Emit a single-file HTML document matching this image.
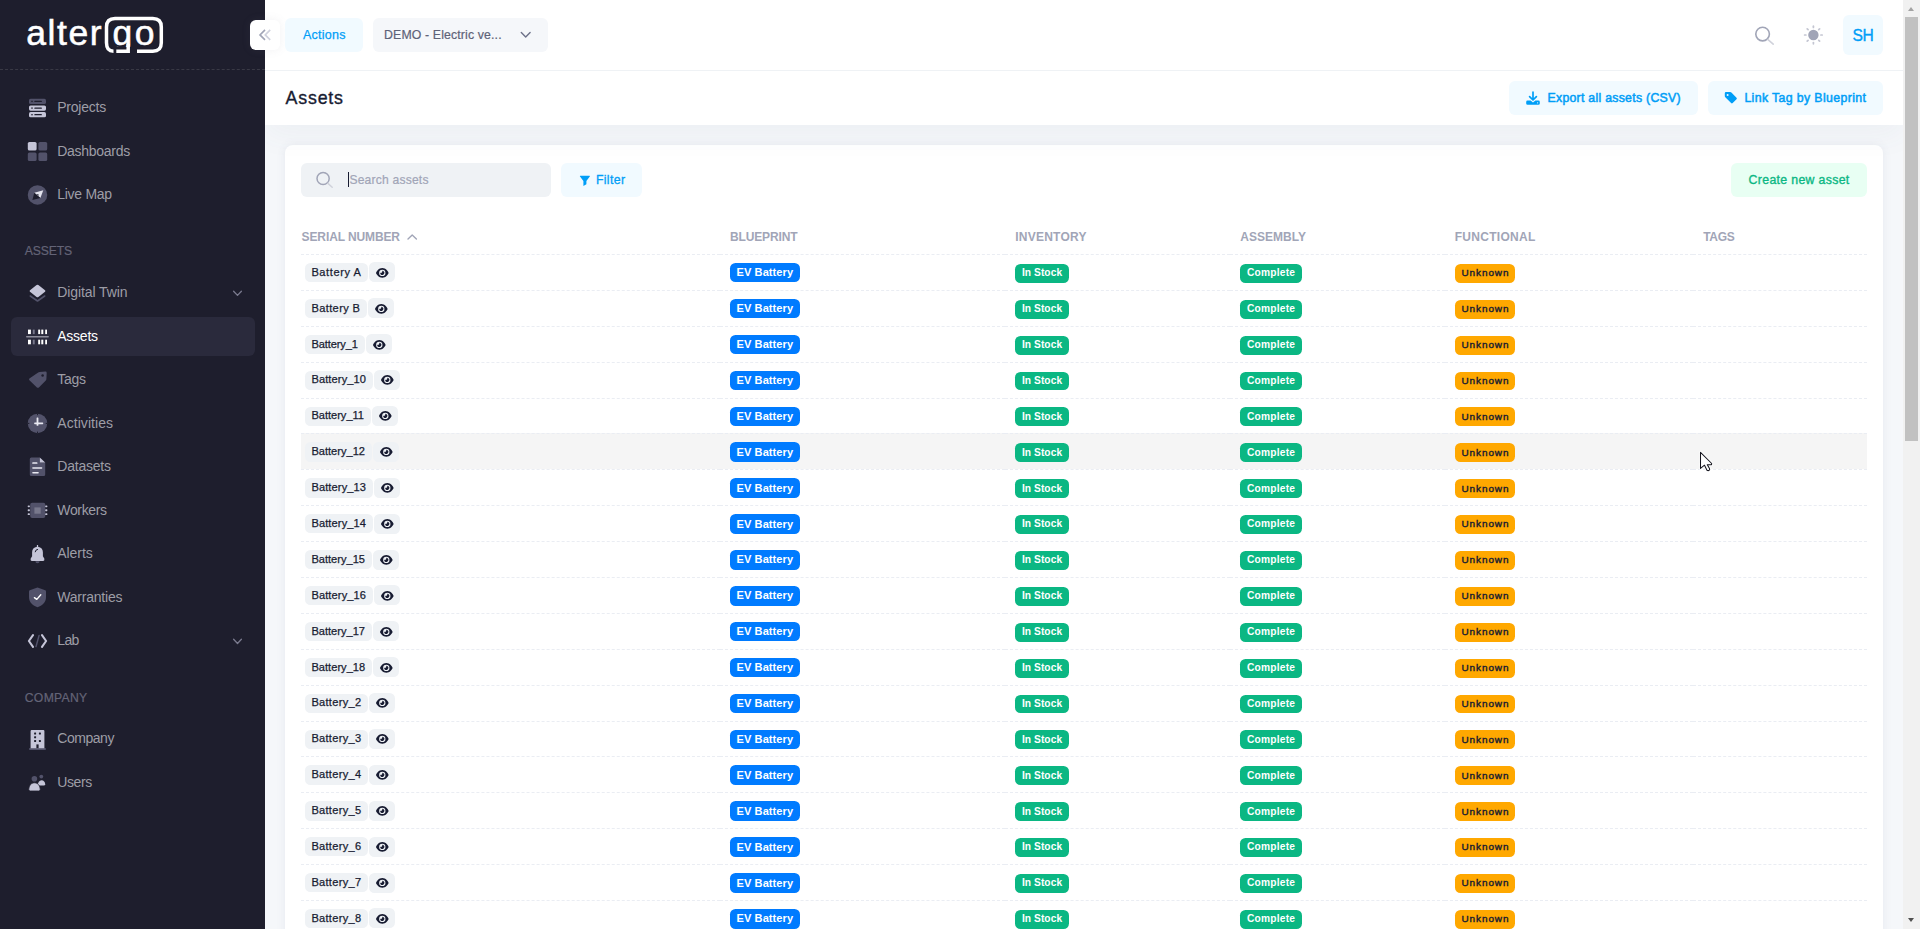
<!DOCTYPE html>
<html lang="en">
<head>
<meta charset="utf-8">
<title>Assets</title>
<style>
*{box-sizing:border-box;margin:0;padding:0}
html,body{width:1920px;height:929px;overflow:hidden;background:#f5f7fa;font-family:"Liberation Sans",sans-serif}
body{position:relative;color:#181c32}
.t{position:absolute;white-space:pre;line-height:20px}
svg{position:absolute;overflow:visible}
#sidebar{z-index:5;position:absolute;left:0;top:0;width:265px;height:929px;background:#1e1e2d}
#sidebar .sep{position:absolute;left:0;top:69px;width:265px;height:0;border-top:1px dashed #393945}
#sidebar .act{position:absolute;left:11px;top:317px;width:244px;height:39px;border-radius:6px;background:#2a2a3c}
#main{position:absolute;left:0;top:0;width:1903px;height:929px}
#header{z-index:3;position:absolute;left:265px;top:0;width:1638px;height:71px;background:#fff;border-bottom:1px solid #eff2f5}
#toolbar{z-index:2;position:absolute;left:265px;top:71px;width:1638px;height:54px;background:#fff;box-shadow:0 10px 30px rgba(80,90,115,.052)}
.bx{position:absolute;border-radius:6px}
.lp{background:#f1faff}
.ls{background:#e8fff3}
.lg{background:#f5f7fa}
#toggle{position:absolute;left:250px;top:20px;width:30px;height:30px;border-radius:6px;background:#fff;box-shadow:0 0 10px rgba(113,121,136,.1)}
#sb{z-index:7;position:absolute;left:1903px;top:0;width:17px;height:929px;background:#f1f1f1}
#sb .thumb{position:absolute;left:2px;top:17px;width:13px;height:424px;background:#c1c1c1}
#sb i{position:absolute;left:4.6px;width:0;height:0;border-left:3.9px solid transparent;border-right:3.9px solid transparent}
#sb .up{top:7px;border-bottom:4px solid #a3a3a3}
#sb .dn{top:918px;border-top:4px solid #505050}
#card{position:absolute;left:285px;top:145px;width:1598px;height:800px;background:#fff;border-radius:8px;box-shadow:0 0 10px rgba(76,87,125,.09)}
.ln{position:absolute;height:0;border-top:1px dashed #eaedf3}
.hov{position:absolute;left:301px;width:1566px;background:#f5f5f5}
.bd{position:absolute;border-radius:5.5px}
.hc{position:absolute;left:0;top:0;width:0;height:0;z-index:6}

</style>
</head>
<body>
<aside id="sidebar">
<div class="sep"></div><div class="act"></div>
<svg width="265" height="929" viewBox="0 0 265 929" style="left:0;top:0"><path d="M113.5 51.3 Q106.5 51.3 106.5 42.8 V26.9 Q106.5 18.4 115.0 18.4 H152.8 Q161.3 18.4 161.3 26.9 V42.8 Q161.3 51.3 152.8 51.3 H137" fill="none" stroke="#fff" stroke-width="3.5" stroke-linecap="butt"/><path d="M116.3 51.3 H128.2 V44" fill="none" stroke="#fff" stroke-width="3.5" stroke-linejoin="miter"/><rect x="29" y="98.8" width="17" height="5.2" rx="1.6" fill="#52526a"/>
<rect x="31.3" y="100.75" width="1.4" height="1.3" fill="#1e1e2d"/><rect x="34.3" y="100.75" width="7.6" height="1.3" rx=".6" fill="#1e1e2d"/>
<rect x="29" y="105.5" width="17" height="5.2" rx="1.6" fill="#c5c5d8"/>
<rect x="31.3" y="107.45" width="1.4" height="1.3" fill="#1e1e2d"/><rect x="34.3" y="107.45" width="7.6" height="1.3" rx=".6" fill="#1e1e2d"/>
<rect x="29" y="112.1" width="17" height="5.2" rx="1.6" fill="#c5c5d8"/>
<rect x="31.3" y="114.05" width="1.4" height="1.3" fill="#1e1e2d"/><rect x="34.3" y="114.05" width="7.6" height="1.3" rx=".6" fill="#1e1e2d"/>
<rect x="27.8" y="141.9" width="8.8" height="8.6" rx="1.6" fill="#c5c5d8"/>
<rect x="38.4" y="141.9" width="8.8" height="8.6" rx="1.6" fill="#52526a"/>
<rect x="27.8" y="152.4" width="8.8" height="8.6" rx="1.6" fill="#52526a"/>
<rect x="38.4" y="152.4" width="8.8" height="8.6" rx="1.6" fill="#52526a"/>
<circle cx="37.5" cy="194.9" r="9.75" fill="#52526a"/>
<path d="M34.3 192.8 L43.3 190.3 L40.4 198 Z" fill="#e4e4ee"/>
<path d="M34.3 192.8 L40.4 198 L32.4 200 Z" fill="#1e1e2d"/>
<circle cx="37.6" cy="195" r="1" fill="#1e1e2d"/><circle cx="37.6" cy="195" r=".45" fill="#e4e4ee"/>
<path d="M36.6 285 Q37.5 284.3 38.4 285 L45 290.2 Q45.9 291 45 291.8 L38.4 297 Q37.5 297.7 36.6 297 L30 291.8 Q29.1 291 30 290.2 Z" fill="#c5c5d8"/>
<path d="M30.3 296 L37.5 301 L44.7 296" fill="none" stroke="#52526a" stroke-width="1.6" stroke-linecap="round" stroke-linejoin="round"/>
<rect x="28" y="329.6" width="2.9" height="4.5" fill="#fff"/><rect x="28" y="339.7" width="2.9" height="4.6" fill="#fff"/>
<rect x="32.8" y="329.6" width="1.9" height="4.5" fill="#77778a"/><rect x="32.8" y="339.7" width="1.9" height="4.6" fill="#77778a"/>
<rect x="38.2" y="329.6" width="1.9" height="4.5" fill="#fff"/><rect x="38.2" y="339.7" width="1.9" height="4.6" fill="#fff"/>
<rect x="41.3" y="329.6" width="2.0" height="4.5" fill="#fff"/><rect x="41.3" y="339.7" width="2.0" height="4.6" fill="#fff"/>
<rect x="45.2" y="329.6" width="1.8" height="4.5" fill="#fff"/><rect x="45.2" y="339.7" width="1.8" height="4.6" fill="#fff"/>
<rect x="26" y="336" width="22.9" height="1.4" rx=".7" fill="#8e8e9c"/>
<path d="M39.6 371.9 L45.4 371.6 Q46.8 371.6 46.7 373 L46.4 379 Q46.4 379.8 45.8 380.4 L38.9 387.4 Q37.9 388.3 36.9 387.4 L29.4 380.2 Q28.6 379.3 29.4 378.4 L38.2 372.5 Q38.8 372 39.6 371.9 Z" fill="#52526a"/>
<circle cx="42.6" cy="375.5" r="1.25" fill="#1e1e2d"/>
<circle cx="37.5" cy="423.4" r="9.75" fill="#52526a"/>
<rect x="36.6" y="417.4" width="1.8" height="8.4" rx=".6" fill="#e9e9f2"/><rect x="34.2" y="422.4" width="9" height="1.8" rx=".6" fill="#e9e9f2"/>
<rect x="37" y="413.6" width="1" height="1.6" fill="#1e1e2d"/>
<rect x="37" y="431.6" width="1" height="1.6" fill="#1e1e2d"/>
<rect x="27.7" y="422.9" width="1.6" height="1" fill="#1e1e2d"/>
<rect x="45.7" y="422.9" width="1.6" height="1" fill="#1e1e2d"/>
<path d="M31.3 457.6 H39.8 V462.6 H45.2 V474.5 Q45.2 476 43.7 476 H31.3 Q29.8 476 29.8 474.5 V459.1 Q29.8 457.6 31.3 457.6 Z" fill="#52526a"/>
<path d="M39.8 457.6 L45.2 462.6 H39.8 Z" fill="#c5c5d8"/>
<rect x="32.2" y="462.35" width="5.299999999999997" height="1.5" rx=".7" fill="#e9e9f2"/>
<rect x="32.2" y="467.15" width="10.099999999999994" height="1.5" rx=".7" fill="#e9e9f2"/>
<rect x="32.2" y="471.95" width="6.599999999999994" height="1.5" rx=".7" fill="#e9e9f2"/>
<rect x="30.2" y="502.8" width="15.1" height="15.3" rx="2" fill="#52526a"/>
<rect x="34.4" y="507.4" width="6.3" height="6.3" fill="#78788c"/>
<rect x="27.7" y="505.4" width="2.2" height="1.9" rx=".7" fill="#c5c5d8"/><rect x="45.2" y="505.4" width="2.2" height="1.9" rx=".7" fill="#c5c5d8"/>
<rect x="27.7" y="509.3" width="2.2" height="1.9" rx=".7" fill="#c5c5d8"/><rect x="45.2" y="509.3" width="2.2" height="1.9" rx=".7" fill="#c5c5d8"/>
<rect x="27.7" y="513.2" width="2.2" height="1.9" rx=".7" fill="#c5c5d8"/><rect x="45.2" y="513.2" width="2.2" height="1.9" rx=".7" fill="#c5c5d8"/>
<path d="M35.4 561.2 A2.1 2.1 0 0 0 39.6 561.2 Z" fill="#52526a"/>
<path d="M36.9 544.9 H38.1 V546.7 C41.2 547.1 42.9 549.4 42.9 552.3 V556.2 L44.3 558.6 Q44.9 561 43.3 561 H31.7 Q30.1 561 30.7 558.6 L32.1 556.2 V552.3 C32.1 549.4 33.8 547.1 36.9 546.7 Z" fill="#c5c5d8"/>
<path d="M35.2 551.8 A2.6 2.6 0 0 1 37.6 549.4" fill="none" stroke="#1e1e2d" stroke-width="1" stroke-linecap="round"/>
<path d="M37.5 587.5 L45.3 590.2 Q46 590.5 46 591.3 V597 C46 602.4 42.2 605.7 37.5 607.3 C32.8 605.7 29 602.4 29 597 V591.3 Q29 590.5 29.7 590.2 Z" fill="#52526a"/>
<path d="M34.4 597.6 L36.8 599.4 L40.8 594.7" fill="none" stroke="#fff" stroke-width="1.35" stroke-linecap="round" stroke-linejoin="round"/>
<path d="M33 635.2 L28.9 641 L33 646.8" fill="none" stroke="#c5c5d8" stroke-width="2.1" stroke-linecap="round" stroke-linejoin="round"/>
<path d="M42 635.2 L46.1 641 L42 646.8" fill="none" stroke="#c5c5d8" stroke-width="2.1" stroke-linecap="round" stroke-linejoin="round"/>
<path d="M39.1 635.4 L36 646.6" fill="none" stroke="#52526a" stroke-width="1.5" stroke-linecap="round"/>
<rect x="29" y="748" width="17" height="1.9" rx=".9" fill="#52526a"/>
<path d="M31.6 730 H43.4 Q44.4 730 44.4 731 V748.2 H30.6 V731 Q30.6 730 31.6 730 Z" fill="#c5c5d8"/>
<rect x="34.1" y="732.6" width="2" height="2" rx=".5" fill="#1e1e2d"/>
<rect x="34.1" y="736.3" width="2" height="2" rx=".5" fill="#1e1e2d"/>
<rect x="34.1" y="740" width="2" height="2" rx=".5" fill="#1e1e2d"/>
<rect x="38.9" y="732.6" width="2" height="2" rx=".5" fill="#1e1e2d"/>
<rect x="38.9" y="740" width="2" height="2" rx=".5" fill="#1e1e2d"/>
<rect x="36.4" y="744.4" width="2.2" height="3.8" fill="#1e1e2d"/>
<circle cx="34.4" cy="778.8" r="2.8" fill="#52526a"/><circle cx="41.3" cy="776.6" r="1.9" fill="#52526a"/>
<path d="M37.8 785.6 C37.8 782.4 39.3 780.2 41.5 780.2 C43.7 780.2 45.2 782.4 45.2 784.2 Q45.2 785.6 43.8 785.6 Z" fill="#c5c5d8"/>
<path d="M28.8 789.6 C28.8 785.6 31.2 782.8 34.5 782.8 C37.8 782.8 40.2 785.6 40.2 789.6 Q40.2 791 38.8 791 H30.2 Q28.8 791 28.8 789.6 Z" fill="#c5c5d8" stroke="#1e1e2d" stroke-width=".8"/>
<path d="M233.6 291.2 L237.5 295.4 L241.4 291.2" fill="none" stroke="#7a7a8e" stroke-width="1.3" stroke-linecap="round" stroke-linejoin="round"/>
<path d="M233.6 639.3 L237.5 643.5 L241.4 639.3" fill="none" stroke="#7a7a8e" stroke-width="1.3" stroke-linecap="round" stroke-linejoin="round"/></svg>
<span class="t" style="left:57.25px;top:97px;font-size:14.0px;color:#9d9da6;letter-spacing:-0.225px;">Projects</span>
<span class="t" style="left:57.25px;top:141px;font-size:14.0px;color:#9d9da6;letter-spacing:-0.278px;">Dashboards</span>
<span class="t" style="left:57.25px;top:184px;font-size:14.0px;color:#9d9da6;letter-spacing:-0.280px;">Live Map</span>
<span class="t" style="left:57.25px;top:282px;font-size:14.0px;color:#9d9da6;letter-spacing:-0.084px;">Digital Twin</span>
<span class="t" style="left:57.25px;top:326px;font-size:14.0px;color:#ffffff;letter-spacing:-0.243px;">Assets</span>
<span class="t" style="left:57.25px;top:369px;font-size:14.0px;color:#9d9da6;letter-spacing:-0.259px;">Tags</span>
<span class="t" style="left:57.25px;top:413px;font-size:14.0px;color:#9d9da6;letter-spacing:0.068px;">Activities</span>
<span class="t" style="left:57.25px;top:456px;font-size:14.0px;color:#9d9da6;letter-spacing:-0.214px;">Datasets</span>
<span class="t" style="left:57.25px;top:500px;font-size:14.0px;color:#9d9da6;letter-spacing:-0.335px;">Workers</span>
<span class="t" style="left:57.25px;top:543px;font-size:14.0px;color:#9d9da6;letter-spacing:-0.059px;">Alerts</span>
<span class="t" style="left:57.25px;top:587px;font-size:14.0px;color:#9d9da6;letter-spacing:-0.214px;">Warranties</span>
<span class="t" style="left:57.25px;top:630px;font-size:14.0px;color:#9d9da6;letter-spacing:-0.605px;">Lab</span>
<span class="t" style="left:57.25px;top:728px;font-size:14.0px;color:#9d9da6;letter-spacing:-0.462px;">Company</span>
<span class="t" style="left:57.25px;top:772px;font-size:14.0px;color:#9d9da6;letter-spacing:-0.391px;">Users</span>
<span class="t" style="left:24.75px;top:241px;font-size:12.2px;color:#646477;letter-spacing:-0.119px;-webkit-text-stroke:.2px #646477;">ASSETS</span>
<span class="t" style="left:24.75px;top:688px;font-size:12.2px;color:#646477;letter-spacing:0.297px;-webkit-text-stroke:.2px #646477;">COMPANY</span>
<span class="t" style="left:26.20px;top:23px;font-size:35.5px;color:#ffffff;letter-spacing:1.609px;-webkit-text-stroke:.55px #fff;">alter</span>
<span class="t" style="left:112.60px;top:23px;font-size:35.5px;color:#ffffff;letter-spacing:2.300px;-webkit-text-stroke:.55px #fff;clip-path:inset(-20px -5px -4px -5px);">go</span>
</aside>
<main id="main">
<div id="toolbar"></div><header id="header"></header><div class="hc">
<div id="toggle"></div>
<div class="bx lp" style="left:285px;top:18px;width:78px;height:34px"></div>
<div class="bx lg" style="left:373px;top:18px;width:175px;height:34px"></div>
<div class="bx lp" style="left:1843px;top:15px;width:40px;height:40px"></div>
<div class="bx lp" style="left:1509px;top:81px;width:189px;height:34px"></div>
<div class="bx lp" style="left:1708px;top:81px;width:175px;height:34px"></div>
<svg width="1903" height="130" viewBox="0 0 1903 130" style="left:0;top:0"><path d="M265 29.9 L260 34.9 L265 39.9" fill="none" stroke="#a1a5b7" stroke-width="1.6" stroke-linecap="butt" stroke-linejoin="miter"/><path d="M270.2 29.9 L265.2 34.9 L270.2 39.9" fill="none" stroke="#cfd1dd" stroke-width="1.6" stroke-linecap="butt" stroke-linejoin="miter"/><path d="M521.3 32.6 L525.7 37 L530.1 32.6" fill="none" stroke="#6d7189" stroke-width="1.4" stroke-linecap="round" stroke-linejoin="round"/><circle cx="1762.6" cy="34.1" r="6.8" fill="none" stroke="#a1a5b7" stroke-width="1.6"/><path d="M1768 39.6 L1773.2 44.2" stroke="#d0d2db" stroke-width="1.6" stroke-linecap="round"/><circle cx="1813.4" cy="35" r="5.2" fill="#a1a5b7"/><path d="M1820.90 35.00 L1822.20 35.00" stroke="#c4c6d2" stroke-width="1.7" stroke-linecap="round"/><path d="M1818.70 40.30 L1819.62 41.22" stroke="#c4c6d2" stroke-width="1.7" stroke-linecap="round"/><path d="M1813.40 42.50 L1813.40 43.80" stroke="#c4c6d2" stroke-width="1.7" stroke-linecap="round"/><path d="M1808.10 40.30 L1807.18 41.22" stroke="#c4c6d2" stroke-width="1.7" stroke-linecap="round"/><path d="M1805.90 35.00 L1804.60 35.00" stroke="#c4c6d2" stroke-width="1.7" stroke-linecap="round"/><path d="M1808.10 29.70 L1807.18 28.78" stroke="#c4c6d2" stroke-width="1.7" stroke-linecap="round"/><path d="M1813.40 27.50 L1813.40 26.20" stroke="#c4c6d2" stroke-width="1.7" stroke-linecap="round"/><path d="M1818.70 29.70 L1819.62 28.78" stroke="#c4c6d2" stroke-width="1.7" stroke-linecap="round"/><path d="M1533 92.2 V99.6 M1529.6 96.6 L1533 100 L1536.4 96.6" fill="none" stroke="#009ef7" stroke-width="1.7" stroke-linecap="round" stroke-linejoin="round"/><path d="M1527.6 100.6 H1530.6 L1533 102.6 L1535.4 100.6 H1538.4 Q1539.8 100.6 1539.8 102 V103.4 Q1539.8 104.8 1538.4 104.8 H1527.6 Q1526.2 104.8 1526.2 103.4 V102 Q1526.2 100.6 1527.6 100.6 Z" fill="#009ef7"/><circle cx="1537.6" cy="102.8" r=".6" fill="#f1faff"/><path d="M1724.8 93.3 Q1724.8 92.1 1726 92.1 H1730.2 Q1730.9 92.1 1731.4 92.6 L1736.5 97.7 Q1737.3 98.5 1736.5 99.3 L1732.7 103.1 Q1731.9 103.9 1731.1 103.1 L1725.3 97.3 Q1724.8 96.8 1724.8 96.1 Z" fill="#009ef7"/><circle cx="1727.6" cy="94.9" r="1" fill="#f1faff"/></svg>
<span class="t" style="left:302.90px;top:25px;font-size:12.5px;color:#009ef7;letter-spacing:0.250px;-webkit-text-stroke:.25px #009ef7;">Actions</span>
<span class="t" style="left:384.10px;top:25px;font-size:12.3px;color:#5e6278;letter-spacing:0.135px;-webkit-text-stroke:.2px #5e6278;">DEMO - Electric ve...</span>
<span class="t" style="left:1852.50px;top:26px;font-size:15.6px;color:#009ef7;letter-spacing:-0.372px;-webkit-text-stroke:.35px #009ef7;">SH</span>
<span class="t" style="left:285.60px;top:88px;font-size:17.8px;color:#181c32;letter-spacing:0.805px;-webkit-text-stroke:.35px #181c32;">Assets</span>
<span class="t" style="left:1547.50px;top:88px;font-size:12.3px;color:#009ef7;letter-spacing:0.272px;-webkit-text-stroke:.5px #009ef7;">Export all assets (CSV)</span>
<span class="t" style="left:1744.40px;top:88px;font-size:12.3px;color:#009ef7;letter-spacing:0.378px;-webkit-text-stroke:.5px #009ef7;">Link Tag by Blueprint</span>
</div>
<section id="card"></section>
<div class="bx" style="left:301px;top:163px;width:250px;height:34px;background:#eff2f5"></div>
<div class="bx lp" style="left:561px;top:163px;width:81px;height:34px"></div>
<div class="bx ls" style="left:1731px;top:163px;width:136px;height:34px"></div>
<div style="position:absolute;left:348px;top:172px;width:1px;height:15px;background:#181c32"></div>
<svg width="1903" height="260" viewBox="0 0 1903 260" style="left:0;top:0"><circle cx="323.1" cy="178.5" r="6.1" fill="none" stroke="#a1a5b7" stroke-width="1.5"/><path d="M327.9 183.4 L332.2 187.2" stroke="#d0d2db" stroke-width="1.5" stroke-linecap="round"/><path d="M580.4 175.7 H589.4 Q590.3 175.7 589.8 176.5 L586.4 181 V184.3 L583.4 186 V181 L580 176.5 Q579.5 175.7 580.4 175.7 Z" fill="#009ef7"/><path d="M408 238.9 L412.2 234.9 L416.4 238.9" fill="none" stroke="#a1a5b7" stroke-width="1.4" stroke-linecap="round" stroke-linejoin="round"/></svg>
<div class="hov" style="top:433px;height:36px"></div>
<div class="ln" style="top:254px;left:301px;width:419.25px"></div>
<div class="ln" style="top:254px;left:720.25px;width:285.0px"></div>
<div class="ln" style="top:254px;left:1005.25px;width:225.0px"></div>
<div class="ln" style="top:254px;left:1230.25px;width:215.0px"></div>
<div class="ln" style="top:254px;left:1445.25px;width:248.0px"></div>
<div class="ln" style="top:254px;left:1693.25px;width:173.75px"></div>
<div class="ln" style="top:290px;left:301px;width:419.25px"></div>
<div class="ln" style="top:290px;left:720.25px;width:285.0px"></div>
<div class="ln" style="top:290px;left:1005.25px;width:225.0px"></div>
<div class="ln" style="top:290px;left:1230.25px;width:215.0px"></div>
<div class="ln" style="top:290px;left:1445.25px;width:248.0px"></div>
<div class="ln" style="top:290px;left:1693.25px;width:173.75px"></div>
<div class="ln" style="top:326px;left:301px;width:419.25px"></div>
<div class="ln" style="top:326px;left:720.25px;width:285.0px"></div>
<div class="ln" style="top:326px;left:1005.25px;width:225.0px"></div>
<div class="ln" style="top:326px;left:1230.25px;width:215.0px"></div>
<div class="ln" style="top:326px;left:1445.25px;width:248.0px"></div>
<div class="ln" style="top:326px;left:1693.25px;width:173.75px"></div>
<div class="ln" style="top:362px;left:301px;width:419.25px"></div>
<div class="ln" style="top:362px;left:720.25px;width:285.0px"></div>
<div class="ln" style="top:362px;left:1005.25px;width:225.0px"></div>
<div class="ln" style="top:362px;left:1230.25px;width:215.0px"></div>
<div class="ln" style="top:362px;left:1445.25px;width:248.0px"></div>
<div class="ln" style="top:362px;left:1693.25px;width:173.75px"></div>
<div class="ln" style="top:398px;left:301px;width:419.25px"></div>
<div class="ln" style="top:398px;left:720.25px;width:285.0px"></div>
<div class="ln" style="top:398px;left:1005.25px;width:225.0px"></div>
<div class="ln" style="top:398px;left:1230.25px;width:215.0px"></div>
<div class="ln" style="top:398px;left:1445.25px;width:248.0px"></div>
<div class="ln" style="top:398px;left:1693.25px;width:173.75px"></div>
<div class="ln" style="top:433px;left:301px;width:419.25px"></div>
<div class="ln" style="top:433px;left:720.25px;width:285.0px"></div>
<div class="ln" style="top:433px;left:1005.25px;width:225.0px"></div>
<div class="ln" style="top:433px;left:1230.25px;width:215.0px"></div>
<div class="ln" style="top:433px;left:1445.25px;width:248.0px"></div>
<div class="ln" style="top:433px;left:1693.25px;width:173.75px"></div>
<div class="ln" style="top:469px;left:301px;width:419.25px"></div>
<div class="ln" style="top:469px;left:720.25px;width:285.0px"></div>
<div class="ln" style="top:469px;left:1005.25px;width:225.0px"></div>
<div class="ln" style="top:469px;left:1230.25px;width:215.0px"></div>
<div class="ln" style="top:469px;left:1445.25px;width:248.0px"></div>
<div class="ln" style="top:469px;left:1693.25px;width:173.75px"></div>
<div class="ln" style="top:505px;left:301px;width:419.25px"></div>
<div class="ln" style="top:505px;left:720.25px;width:285.0px"></div>
<div class="ln" style="top:505px;left:1005.25px;width:225.0px"></div>
<div class="ln" style="top:505px;left:1230.25px;width:215.0px"></div>
<div class="ln" style="top:505px;left:1445.25px;width:248.0px"></div>
<div class="ln" style="top:505px;left:1693.25px;width:173.75px"></div>
<div class="ln" style="top:541px;left:301px;width:419.25px"></div>
<div class="ln" style="top:541px;left:720.25px;width:285.0px"></div>
<div class="ln" style="top:541px;left:1005.25px;width:225.0px"></div>
<div class="ln" style="top:541px;left:1230.25px;width:215.0px"></div>
<div class="ln" style="top:541px;left:1445.25px;width:248.0px"></div>
<div class="ln" style="top:541px;left:1693.25px;width:173.75px"></div>
<div class="ln" style="top:577px;left:301px;width:419.25px"></div>
<div class="ln" style="top:577px;left:720.25px;width:285.0px"></div>
<div class="ln" style="top:577px;left:1005.25px;width:225.0px"></div>
<div class="ln" style="top:577px;left:1230.25px;width:215.0px"></div>
<div class="ln" style="top:577px;left:1445.25px;width:248.0px"></div>
<div class="ln" style="top:577px;left:1693.25px;width:173.75px"></div>
<div class="ln" style="top:613px;left:301px;width:419.25px"></div>
<div class="ln" style="top:613px;left:720.25px;width:285.0px"></div>
<div class="ln" style="top:613px;left:1005.25px;width:225.0px"></div>
<div class="ln" style="top:613px;left:1230.25px;width:215.0px"></div>
<div class="ln" style="top:613px;left:1445.25px;width:248.0px"></div>
<div class="ln" style="top:613px;left:1693.25px;width:173.75px"></div>
<div class="ln" style="top:649px;left:301px;width:419.25px"></div>
<div class="ln" style="top:649px;left:720.25px;width:285.0px"></div>
<div class="ln" style="top:649px;left:1005.25px;width:225.0px"></div>
<div class="ln" style="top:649px;left:1230.25px;width:215.0px"></div>
<div class="ln" style="top:649px;left:1445.25px;width:248.0px"></div>
<div class="ln" style="top:649px;left:1693.25px;width:173.75px"></div>
<div class="ln" style="top:685px;left:301px;width:419.25px"></div>
<div class="ln" style="top:685px;left:720.25px;width:285.0px"></div>
<div class="ln" style="top:685px;left:1005.25px;width:225.0px"></div>
<div class="ln" style="top:685px;left:1230.25px;width:215.0px"></div>
<div class="ln" style="top:685px;left:1445.25px;width:248.0px"></div>
<div class="ln" style="top:685px;left:1693.25px;width:173.75px"></div>
<div class="ln" style="top:721px;left:301px;width:419.25px"></div>
<div class="ln" style="top:721px;left:720.25px;width:285.0px"></div>
<div class="ln" style="top:721px;left:1005.25px;width:225.0px"></div>
<div class="ln" style="top:721px;left:1230.25px;width:215.0px"></div>
<div class="ln" style="top:721px;left:1445.25px;width:248.0px"></div>
<div class="ln" style="top:721px;left:1693.25px;width:173.75px"></div>
<div class="ln" style="top:756px;left:301px;width:419.25px"></div>
<div class="ln" style="top:756px;left:720.25px;width:285.0px"></div>
<div class="ln" style="top:756px;left:1005.25px;width:225.0px"></div>
<div class="ln" style="top:756px;left:1230.25px;width:215.0px"></div>
<div class="ln" style="top:756px;left:1445.25px;width:248.0px"></div>
<div class="ln" style="top:756px;left:1693.25px;width:173.75px"></div>
<div class="ln" style="top:792px;left:301px;width:419.25px"></div>
<div class="ln" style="top:792px;left:720.25px;width:285.0px"></div>
<div class="ln" style="top:792px;left:1005.25px;width:225.0px"></div>
<div class="ln" style="top:792px;left:1230.25px;width:215.0px"></div>
<div class="ln" style="top:792px;left:1445.25px;width:248.0px"></div>
<div class="ln" style="top:792px;left:1693.25px;width:173.75px"></div>
<div class="ln" style="top:828px;left:301px;width:419.25px"></div>
<div class="ln" style="top:828px;left:720.25px;width:285.0px"></div>
<div class="ln" style="top:828px;left:1005.25px;width:225.0px"></div>
<div class="ln" style="top:828px;left:1230.25px;width:215.0px"></div>
<div class="ln" style="top:828px;left:1445.25px;width:248.0px"></div>
<div class="ln" style="top:828px;left:1693.25px;width:173.75px"></div>
<div class="ln" style="top:864px;left:301px;width:419.25px"></div>
<div class="ln" style="top:864px;left:720.25px;width:285.0px"></div>
<div class="ln" style="top:864px;left:1005.25px;width:225.0px"></div>
<div class="ln" style="top:864px;left:1230.25px;width:215.0px"></div>
<div class="ln" style="top:864px;left:1445.25px;width:248.0px"></div>
<div class="ln" style="top:864px;left:1693.25px;width:173.75px"></div>
<div class="ln" style="top:900px;left:301px;width:419.25px"></div>
<div class="ln" style="top:900px;left:720.25px;width:285.0px"></div>
<div class="ln" style="top:900px;left:1005.25px;width:225.0px"></div>
<div class="ln" style="top:900px;left:1230.25px;width:215.0px"></div>
<div class="ln" style="top:900px;left:1445.25px;width:248.0px"></div>
<div class="ln" style="top:900px;left:1693.25px;width:173.75px"></div>
<div class="bd" style="left:305.1px;top:262.99px;width:62.60px;height:19.2px;background:#eff2f5"></div>
<div class="bd" style="left:368.90px;top:262.40px;width:25.7px;height:20px;background:#eff2f5"></div>
<svg width="12.6" height="9.8" viewBox="0 32 576 448" style="left:376.10px;top:267.75px"><path d="M288 32c-80.8 0-145.5 36.8-192.6 80.6C48.6 156 17.3 208 2.5 243.7c-3.3 7.9-3.3 16.7 0 24.6C17.3 304 48.6 356 95.4 399.4C142.5 443.2 207.2 480 288 480s145.5-36.8 192.6-80.6c46.8-43.5 78.1-95.4 93-131.1c3.3-7.9 3.3-16.7 0-24.6c-14.9-35.7-46.2-87.7-93-131.1C433.5 68.8 368.8 32 288 32zM144 256a144 144 0 1 1 288 0 144 144 0 1 1 -288 0zm144-64c0 35.3-28.7 64-64 64c-7.1 0-13.9-1.2-20.3-3.3c-5.5-1.8-11.9 1.6-11.7 7.4c.3 6.9 1.3 13.8 3.2 20.7c13.7 51.2 66.4 81.6 117.6 67.9s81.6-66.4 67.9-117.6c-11.1-41.5-47.8-69.4-88.6-71.1c-5.8-.2-9.2 6.1-7.4 11.7c2.1 6.4 3.3 13.2 3.3 20.3z" fill="#181c32"/></svg>
<div class="bd" style="left:730px;top:262.99px;width:70px;height:19.5px;background:#007bff"></div>
<div class="bd" style="left:1015px;top:263.91px;width:54px;height:18.85px;background:#0bb783"></div>
<div class="bd" style="left:1240px;top:263.91px;width:62.1px;height:18.85px;background:#0bb783"></div>
<div class="bd" style="left:1455px;top:263.91px;width:60px;height:18.85px;background:#ffa800"></div>
<div class="bd" style="left:305.1px;top:298.88px;width:61.60px;height:19.2px;background:#eff2f5"></div>
<div class="bd" style="left:367.90px;top:298.29px;width:25.7px;height:20px;background:#eff2f5"></div>
<svg width="12.6" height="9.8" viewBox="0 32 576 448" style="left:375.10px;top:303.64px"><path d="M288 32c-80.8 0-145.5 36.8-192.6 80.6C48.6 156 17.3 208 2.5 243.7c-3.3 7.9-3.3 16.7 0 24.6C17.3 304 48.6 356 95.4 399.4C142.5 443.2 207.2 480 288 480s145.5-36.8 192.6-80.6c46.8-43.5 78.1-95.4 93-131.1c3.3-7.9 3.3-16.7 0-24.6c-14.9-35.7-46.2-87.7-93-131.1C433.5 68.8 368.8 32 288 32zM144 256a144 144 0 1 1 288 0 144 144 0 1 1 -288 0zm144-64c0 35.3-28.7 64-64 64c-7.1 0-13.9-1.2-20.3-3.3c-5.5-1.8-11.9 1.6-11.7 7.4c.3 6.9 1.3 13.8 3.2 20.7c13.7 51.2 66.4 81.6 117.6 67.9s81.6-66.4 67.9-117.6c-11.1-41.5-47.8-69.4-88.6-71.1c-5.8-.2-9.2 6.1-7.4 11.7c2.1 6.4 3.3 13.2 3.3 20.3z" fill="#181c32"/></svg>
<div class="bd" style="left:730px;top:298.88px;width:70px;height:19.5px;background:#007bff"></div>
<div class="bd" style="left:1015px;top:299.80px;width:54px;height:18.85px;background:#0bb783"></div>
<div class="bd" style="left:1240px;top:299.80px;width:62.1px;height:18.85px;background:#0bb783"></div>
<div class="bd" style="left:1455px;top:299.80px;width:60px;height:18.85px;background:#ffa800"></div>
<div class="bd" style="left:305.1px;top:334.77px;width:59.60px;height:19.2px;background:#eff2f5"></div>
<div class="bd" style="left:365.90px;top:334.18px;width:25.7px;height:20px;background:#eff2f5"></div>
<svg width="12.6" height="9.8" viewBox="0 32 576 448" style="left:373.10px;top:339.53px"><path d="M288 32c-80.8 0-145.5 36.8-192.6 80.6C48.6 156 17.3 208 2.5 243.7c-3.3 7.9-3.3 16.7 0 24.6C17.3 304 48.6 356 95.4 399.4C142.5 443.2 207.2 480 288 480s145.5-36.8 192.6-80.6c46.8-43.5 78.1-95.4 93-131.1c3.3-7.9 3.3-16.7 0-24.6c-14.9-35.7-46.2-87.7-93-131.1C433.5 68.8 368.8 32 288 32zM144 256a144 144 0 1 1 288 0 144 144 0 1 1 -288 0zm144-64c0 35.3-28.7 64-64 64c-7.1 0-13.9-1.2-20.3-3.3c-5.5-1.8-11.9 1.6-11.7 7.4c.3 6.9 1.3 13.8 3.2 20.7c13.7 51.2 66.4 81.6 117.6 67.9s81.6-66.4 67.9-117.6c-11.1-41.5-47.8-69.4-88.6-71.1c-5.8-.2-9.2 6.1-7.4 11.7c2.1 6.4 3.3 13.2 3.3 20.3z" fill="#181c32"/></svg>
<div class="bd" style="left:730px;top:334.77px;width:70px;height:19.5px;background:#007bff"></div>
<div class="bd" style="left:1015px;top:335.69px;width:54px;height:18.85px;background:#0bb783"></div>
<div class="bd" style="left:1240px;top:335.69px;width:62.1px;height:18.85px;background:#0bb783"></div>
<div class="bd" style="left:1455px;top:335.69px;width:60px;height:18.85px;background:#ffa800"></div>
<div class="bd" style="left:305.1px;top:370.66px;width:67.60px;height:19.2px;background:#eff2f5"></div>
<div class="bd" style="left:373.90px;top:370.07px;width:25.7px;height:20px;background:#eff2f5"></div>
<svg width="12.6" height="9.8" viewBox="0 32 576 448" style="left:381.10px;top:375.42px"><path d="M288 32c-80.8 0-145.5 36.8-192.6 80.6C48.6 156 17.3 208 2.5 243.7c-3.3 7.9-3.3 16.7 0 24.6C17.3 304 48.6 356 95.4 399.4C142.5 443.2 207.2 480 288 480s145.5-36.8 192.6-80.6c46.8-43.5 78.1-95.4 93-131.1c3.3-7.9 3.3-16.7 0-24.6c-14.9-35.7-46.2-87.7-93-131.1C433.5 68.8 368.8 32 288 32zM144 256a144 144 0 1 1 288 0 144 144 0 1 1 -288 0zm144-64c0 35.3-28.7 64-64 64c-7.1 0-13.9-1.2-20.3-3.3c-5.5-1.8-11.9 1.6-11.7 7.4c.3 6.9 1.3 13.8 3.2 20.7c13.7 51.2 66.4 81.6 117.6 67.9s81.6-66.4 67.9-117.6c-11.1-41.5-47.8-69.4-88.6-71.1c-5.8-.2-9.2 6.1-7.4 11.7c2.1 6.4 3.3 13.2 3.3 20.3z" fill="#181c32"/></svg>
<div class="bd" style="left:730px;top:370.66px;width:70px;height:19.5px;background:#007bff"></div>
<div class="bd" style="left:1015px;top:371.58px;width:54px;height:18.85px;background:#0bb783"></div>
<div class="bd" style="left:1240px;top:371.58px;width:62.1px;height:18.85px;background:#0bb783"></div>
<div class="bd" style="left:1455px;top:371.58px;width:60px;height:18.85px;background:#ffa800"></div>
<div class="bd" style="left:305.1px;top:406.55px;width:65.60px;height:19.2px;background:#eff2f5"></div>
<div class="bd" style="left:371.90px;top:405.96px;width:25.7px;height:20px;background:#eff2f5"></div>
<svg width="12.6" height="9.8" viewBox="0 32 576 448" style="left:379.10px;top:411.31px"><path d="M288 32c-80.8 0-145.5 36.8-192.6 80.6C48.6 156 17.3 208 2.5 243.7c-3.3 7.9-3.3 16.7 0 24.6C17.3 304 48.6 356 95.4 399.4C142.5 443.2 207.2 480 288 480s145.5-36.8 192.6-80.6c46.8-43.5 78.1-95.4 93-131.1c3.3-7.9 3.3-16.7 0-24.6c-14.9-35.7-46.2-87.7-93-131.1C433.5 68.8 368.8 32 288 32zM144 256a144 144 0 1 1 288 0 144 144 0 1 1 -288 0zm144-64c0 35.3-28.7 64-64 64c-7.1 0-13.9-1.2-20.3-3.3c-5.5-1.8-11.9 1.6-11.7 7.4c.3 6.9 1.3 13.8 3.2 20.7c13.7 51.2 66.4 81.6 117.6 67.9s81.6-66.4 67.9-117.6c-11.1-41.5-47.8-69.4-88.6-71.1c-5.8-.2-9.2 6.1-7.4 11.7c2.1 6.4 3.3 13.2 3.3 20.3z" fill="#181c32"/></svg>
<div class="bd" style="left:730px;top:406.55px;width:70px;height:19.5px;background:#007bff"></div>
<div class="bd" style="left:1015px;top:407.47px;width:54px;height:18.85px;background:#0bb783"></div>
<div class="bd" style="left:1240px;top:407.47px;width:62.1px;height:18.85px;background:#0bb783"></div>
<div class="bd" style="left:1455px;top:407.47px;width:60px;height:18.85px;background:#ffa800"></div>
<div class="bd" style="left:305.1px;top:442.44px;width:66.60px;height:19.2px;background:#eff2f5"></div>
<div class="bd" style="left:372.90px;top:441.85px;width:25.7px;height:20px;background:#eff2f5"></div>
<svg width="12.6" height="9.8" viewBox="0 32 576 448" style="left:380.10px;top:447.20px"><path d="M288 32c-80.8 0-145.5 36.8-192.6 80.6C48.6 156 17.3 208 2.5 243.7c-3.3 7.9-3.3 16.7 0 24.6C17.3 304 48.6 356 95.4 399.4C142.5 443.2 207.2 480 288 480s145.5-36.8 192.6-80.6c46.8-43.5 78.1-95.4 93-131.1c3.3-7.9 3.3-16.7 0-24.6c-14.9-35.7-46.2-87.7-93-131.1C433.5 68.8 368.8 32 288 32zM144 256a144 144 0 1 1 288 0 144 144 0 1 1 -288 0zm144-64c0 35.3-28.7 64-64 64c-7.1 0-13.9-1.2-20.3-3.3c-5.5-1.8-11.9 1.6-11.7 7.4c.3 6.9 1.3 13.8 3.2 20.7c13.7 51.2 66.4 81.6 117.6 67.9s81.6-66.4 67.9-117.6c-11.1-41.5-47.8-69.4-88.6-71.1c-5.8-.2-9.2 6.1-7.4 11.7c2.1 6.4 3.3 13.2 3.3 20.3z" fill="#181c32"/></svg>
<div class="bd" style="left:730px;top:442.44px;width:70px;height:19.5px;background:#007bff"></div>
<div class="bd" style="left:1015px;top:443.36px;width:54px;height:18.85px;background:#0bb783"></div>
<div class="bd" style="left:1240px;top:443.36px;width:62.1px;height:18.85px;background:#0bb783"></div>
<div class="bd" style="left:1455px;top:443.36px;width:60px;height:18.85px;background:#ffa800"></div>
<div class="bd" style="left:305.1px;top:478.33px;width:67.60px;height:19.2px;background:#eff2f5"></div>
<div class="bd" style="left:373.90px;top:477.74px;width:25.7px;height:20px;background:#eff2f5"></div>
<svg width="12.6" height="9.8" viewBox="0 32 576 448" style="left:381.10px;top:483.09px"><path d="M288 32c-80.8 0-145.5 36.8-192.6 80.6C48.6 156 17.3 208 2.5 243.7c-3.3 7.9-3.3 16.7 0 24.6C17.3 304 48.6 356 95.4 399.4C142.5 443.2 207.2 480 288 480s145.5-36.8 192.6-80.6c46.8-43.5 78.1-95.4 93-131.1c3.3-7.9 3.3-16.7 0-24.6c-14.9-35.7-46.2-87.7-93-131.1C433.5 68.8 368.8 32 288 32zM144 256a144 144 0 1 1 288 0 144 144 0 1 1 -288 0zm144-64c0 35.3-28.7 64-64 64c-7.1 0-13.9-1.2-20.3-3.3c-5.5-1.8-11.9 1.6-11.7 7.4c.3 6.9 1.3 13.8 3.2 20.7c13.7 51.2 66.4 81.6 117.6 67.9s81.6-66.4 67.9-117.6c-11.1-41.5-47.8-69.4-88.6-71.1c-5.8-.2-9.2 6.1-7.4 11.7c2.1 6.4 3.3 13.2 3.3 20.3z" fill="#181c32"/></svg>
<div class="bd" style="left:730px;top:478.33px;width:70px;height:19.5px;background:#007bff"></div>
<div class="bd" style="left:1015px;top:479.25px;width:54px;height:18.85px;background:#0bb783"></div>
<div class="bd" style="left:1240px;top:479.25px;width:62.1px;height:18.85px;background:#0bb783"></div>
<div class="bd" style="left:1455px;top:479.25px;width:60px;height:18.85px;background:#ffa800"></div>
<div class="bd" style="left:305.1px;top:514.22px;width:67.60px;height:19.2px;background:#eff2f5"></div>
<div class="bd" style="left:373.90px;top:513.63px;width:25.7px;height:20px;background:#eff2f5"></div>
<svg width="12.6" height="9.8" viewBox="0 32 576 448" style="left:381.10px;top:518.98px"><path d="M288 32c-80.8 0-145.5 36.8-192.6 80.6C48.6 156 17.3 208 2.5 243.7c-3.3 7.9-3.3 16.7 0 24.6C17.3 304 48.6 356 95.4 399.4C142.5 443.2 207.2 480 288 480s145.5-36.8 192.6-80.6c46.8-43.5 78.1-95.4 93-131.1c3.3-7.9 3.3-16.7 0-24.6c-14.9-35.7-46.2-87.7-93-131.1C433.5 68.8 368.8 32 288 32zM144 256a144 144 0 1 1 288 0 144 144 0 1 1 -288 0zm144-64c0 35.3-28.7 64-64 64c-7.1 0-13.9-1.2-20.3-3.3c-5.5-1.8-11.9 1.6-11.7 7.4c.3 6.9 1.3 13.8 3.2 20.7c13.7 51.2 66.4 81.6 117.6 67.9s81.6-66.4 67.9-117.6c-11.1-41.5-47.8-69.4-88.6-71.1c-5.8-.2-9.2 6.1-7.4 11.7c2.1 6.4 3.3 13.2 3.3 20.3z" fill="#181c32"/></svg>
<div class="bd" style="left:730px;top:514.22px;width:70px;height:19.5px;background:#007bff"></div>
<div class="bd" style="left:1015px;top:515.14px;width:54px;height:18.85px;background:#0bb783"></div>
<div class="bd" style="left:1240px;top:515.14px;width:62.1px;height:18.85px;background:#0bb783"></div>
<div class="bd" style="left:1455px;top:515.14px;width:60px;height:18.85px;background:#ffa800"></div>
<div class="bd" style="left:305.1px;top:550.11px;width:66.60px;height:19.2px;background:#eff2f5"></div>
<div class="bd" style="left:372.90px;top:549.52px;width:25.7px;height:20px;background:#eff2f5"></div>
<svg width="12.6" height="9.8" viewBox="0 32 576 448" style="left:380.10px;top:554.87px"><path d="M288 32c-80.8 0-145.5 36.8-192.6 80.6C48.6 156 17.3 208 2.5 243.7c-3.3 7.9-3.3 16.7 0 24.6C17.3 304 48.6 356 95.4 399.4C142.5 443.2 207.2 480 288 480s145.5-36.8 192.6-80.6c46.8-43.5 78.1-95.4 93-131.1c3.3-7.9 3.3-16.7 0-24.6c-14.9-35.7-46.2-87.7-93-131.1C433.5 68.8 368.8 32 288 32zM144 256a144 144 0 1 1 288 0 144 144 0 1 1 -288 0zm144-64c0 35.3-28.7 64-64 64c-7.1 0-13.9-1.2-20.3-3.3c-5.5-1.8-11.9 1.6-11.7 7.4c.3 6.9 1.3 13.8 3.2 20.7c13.7 51.2 66.4 81.6 117.6 67.9s81.6-66.4 67.9-117.6c-11.1-41.5-47.8-69.4-88.6-71.1c-5.8-.2-9.2 6.1-7.4 11.7c2.1 6.4 3.3 13.2 3.3 20.3z" fill="#181c32"/></svg>
<div class="bd" style="left:730px;top:550.11px;width:70px;height:19.5px;background:#007bff"></div>
<div class="bd" style="left:1015px;top:551.03px;width:54px;height:18.85px;background:#0bb783"></div>
<div class="bd" style="left:1240px;top:551.03px;width:62.1px;height:18.85px;background:#0bb783"></div>
<div class="bd" style="left:1455px;top:551.03px;width:60px;height:18.85px;background:#ffa800"></div>
<div class="bd" style="left:305.1px;top:586.00px;width:67.60px;height:19.2px;background:#eff2f5"></div>
<div class="bd" style="left:373.90px;top:585.41px;width:25.7px;height:20px;background:#eff2f5"></div>
<svg width="12.6" height="9.8" viewBox="0 32 576 448" style="left:381.10px;top:590.76px"><path d="M288 32c-80.8 0-145.5 36.8-192.6 80.6C48.6 156 17.3 208 2.5 243.7c-3.3 7.9-3.3 16.7 0 24.6C17.3 304 48.6 356 95.4 399.4C142.5 443.2 207.2 480 288 480s145.5-36.8 192.6-80.6c46.8-43.5 78.1-95.4 93-131.1c3.3-7.9 3.3-16.7 0-24.6c-14.9-35.7-46.2-87.7-93-131.1C433.5 68.8 368.8 32 288 32zM144 256a144 144 0 1 1 288 0 144 144 0 1 1 -288 0zm144-64c0 35.3-28.7 64-64 64c-7.1 0-13.9-1.2-20.3-3.3c-5.5-1.8-11.9 1.6-11.7 7.4c.3 6.9 1.3 13.8 3.2 20.7c13.7 51.2 66.4 81.6 117.6 67.9s81.6-66.4 67.9-117.6c-11.1-41.5-47.8-69.4-88.6-71.1c-5.8-.2-9.2 6.1-7.4 11.7c2.1 6.4 3.3 13.2 3.3 20.3z" fill="#181c32"/></svg>
<div class="bd" style="left:730px;top:586.00px;width:70px;height:19.5px;background:#007bff"></div>
<div class="bd" style="left:1015px;top:586.92px;width:54px;height:18.85px;background:#0bb783"></div>
<div class="bd" style="left:1240px;top:586.92px;width:62.1px;height:18.85px;background:#0bb783"></div>
<div class="bd" style="left:1455px;top:586.92px;width:60px;height:18.85px;background:#ffa800"></div>
<div class="bd" style="left:305.1px;top:621.89px;width:66.60px;height:19.2px;background:#eff2f5"></div>
<div class="bd" style="left:372.90px;top:621.30px;width:25.7px;height:20px;background:#eff2f5"></div>
<svg width="12.6" height="9.8" viewBox="0 32 576 448" style="left:380.10px;top:626.65px"><path d="M288 32c-80.8 0-145.5 36.8-192.6 80.6C48.6 156 17.3 208 2.5 243.7c-3.3 7.9-3.3 16.7 0 24.6C17.3 304 48.6 356 95.4 399.4C142.5 443.2 207.2 480 288 480s145.5-36.8 192.6-80.6c46.8-43.5 78.1-95.4 93-131.1c3.3-7.9 3.3-16.7 0-24.6c-14.9-35.7-46.2-87.7-93-131.1C433.5 68.8 368.8 32 288 32zM144 256a144 144 0 1 1 288 0 144 144 0 1 1 -288 0zm144-64c0 35.3-28.7 64-64 64c-7.1 0-13.9-1.2-20.3-3.3c-5.5-1.8-11.9 1.6-11.7 7.4c.3 6.9 1.3 13.8 3.2 20.7c13.7 51.2 66.4 81.6 117.6 67.9s81.6-66.4 67.9-117.6c-11.1-41.5-47.8-69.4-88.6-71.1c-5.8-.2-9.2 6.1-7.4 11.7c2.1 6.4 3.3 13.2 3.3 20.3z" fill="#181c32"/></svg>
<div class="bd" style="left:730px;top:621.89px;width:70px;height:19.5px;background:#007bff"></div>
<div class="bd" style="left:1015px;top:622.81px;width:54px;height:18.85px;background:#0bb783"></div>
<div class="bd" style="left:1240px;top:622.81px;width:62.1px;height:18.85px;background:#0bb783"></div>
<div class="bd" style="left:1455px;top:622.81px;width:60px;height:18.85px;background:#ffa800"></div>
<div class="bd" style="left:305.1px;top:657.78px;width:66.80px;height:19.2px;background:#eff2f5"></div>
<div class="bd" style="left:373.10px;top:657.19px;width:25.7px;height:20px;background:#eff2f5"></div>
<svg width="12.6" height="9.8" viewBox="0 32 576 448" style="left:380.30px;top:662.54px"><path d="M288 32c-80.8 0-145.5 36.8-192.6 80.6C48.6 156 17.3 208 2.5 243.7c-3.3 7.9-3.3 16.7 0 24.6C17.3 304 48.6 356 95.4 399.4C142.5 443.2 207.2 480 288 480s145.5-36.8 192.6-80.6c46.8-43.5 78.1-95.4 93-131.1c3.3-7.9 3.3-16.7 0-24.6c-14.9-35.7-46.2-87.7-93-131.1C433.5 68.8 368.8 32 288 32zM144 256a144 144 0 1 1 288 0 144 144 0 1 1 -288 0zm144-64c0 35.3-28.7 64-64 64c-7.1 0-13.9-1.2-20.3-3.3c-5.5-1.8-11.9 1.6-11.7 7.4c.3 6.9 1.3 13.8 3.2 20.7c13.7 51.2 66.4 81.6 117.6 67.9s81.6-66.4 67.9-117.6c-11.1-41.5-47.8-69.4-88.6-71.1c-5.8-.2-9.2 6.1-7.4 11.7c2.1 6.4 3.3 13.2 3.3 20.3z" fill="#181c32"/></svg>
<div class="bd" style="left:730px;top:657.78px;width:70px;height:19.5px;background:#007bff"></div>
<div class="bd" style="left:1015px;top:658.70px;width:54px;height:18.85px;background:#0bb783"></div>
<div class="bd" style="left:1240px;top:658.70px;width:62.1px;height:18.85px;background:#0bb783"></div>
<div class="bd" style="left:1455px;top:658.70px;width:60px;height:18.85px;background:#ffa800"></div>
<div class="bd" style="left:305.1px;top:693.67px;width:62.70px;height:19.2px;background:#eff2f5"></div>
<div class="bd" style="left:369.00px;top:693.08px;width:25.7px;height:20px;background:#eff2f5"></div>
<svg width="12.6" height="9.8" viewBox="0 32 576 448" style="left:376.20px;top:698.43px"><path d="M288 32c-80.8 0-145.5 36.8-192.6 80.6C48.6 156 17.3 208 2.5 243.7c-3.3 7.9-3.3 16.7 0 24.6C17.3 304 48.6 356 95.4 399.4C142.5 443.2 207.2 480 288 480s145.5-36.8 192.6-80.6c46.8-43.5 78.1-95.4 93-131.1c3.3-7.9 3.3-16.7 0-24.6c-14.9-35.7-46.2-87.7-93-131.1C433.5 68.8 368.8 32 288 32zM144 256a144 144 0 1 1 288 0 144 144 0 1 1 -288 0zm144-64c0 35.3-28.7 64-64 64c-7.1 0-13.9-1.2-20.3-3.3c-5.5-1.8-11.9 1.6-11.7 7.4c.3 6.9 1.3 13.8 3.2 20.7c13.7 51.2 66.4 81.6 117.6 67.9s81.6-66.4 67.9-117.6c-11.1-41.5-47.8-69.4-88.6-71.1c-5.8-.2-9.2 6.1-7.4 11.7c2.1 6.4 3.3 13.2 3.3 20.3z" fill="#181c32"/></svg>
<div class="bd" style="left:730px;top:693.67px;width:70px;height:19.5px;background:#007bff"></div>
<div class="bd" style="left:1015px;top:694.59px;width:54px;height:18.85px;background:#0bb783"></div>
<div class="bd" style="left:1240px;top:694.59px;width:62.1px;height:18.85px;background:#0bb783"></div>
<div class="bd" style="left:1455px;top:694.59px;width:60px;height:18.85px;background:#ffa800"></div>
<div class="bd" style="left:305.1px;top:729.56px;width:62.70px;height:19.2px;background:#eff2f5"></div>
<div class="bd" style="left:369.00px;top:728.97px;width:25.7px;height:20px;background:#eff2f5"></div>
<svg width="12.6" height="9.8" viewBox="0 32 576 448" style="left:376.20px;top:734.32px"><path d="M288 32c-80.8 0-145.5 36.8-192.6 80.6C48.6 156 17.3 208 2.5 243.7c-3.3 7.9-3.3 16.7 0 24.6C17.3 304 48.6 356 95.4 399.4C142.5 443.2 207.2 480 288 480s145.5-36.8 192.6-80.6c46.8-43.5 78.1-95.4 93-131.1c3.3-7.9 3.3-16.7 0-24.6c-14.9-35.7-46.2-87.7-93-131.1C433.5 68.8 368.8 32 288 32zM144 256a144 144 0 1 1 288 0 144 144 0 1 1 -288 0zm144-64c0 35.3-28.7 64-64 64c-7.1 0-13.9-1.2-20.3-3.3c-5.5-1.8-11.9 1.6-11.7 7.4c.3 6.9 1.3 13.8 3.2 20.7c13.7 51.2 66.4 81.6 117.6 67.9s81.6-66.4 67.9-117.6c-11.1-41.5-47.8-69.4-88.6-71.1c-5.8-.2-9.2 6.1-7.4 11.7c2.1 6.4 3.3 13.2 3.3 20.3z" fill="#181c32"/></svg>
<div class="bd" style="left:730px;top:729.56px;width:70px;height:19.5px;background:#007bff"></div>
<div class="bd" style="left:1015px;top:730.48px;width:54px;height:18.85px;background:#0bb783"></div>
<div class="bd" style="left:1240px;top:730.48px;width:62.1px;height:18.85px;background:#0bb783"></div>
<div class="bd" style="left:1455px;top:730.48px;width:60px;height:18.85px;background:#ffa800"></div>
<div class="bd" style="left:305.1px;top:765.45px;width:62.70px;height:19.2px;background:#eff2f5"></div>
<div class="bd" style="left:369.00px;top:764.86px;width:25.7px;height:20px;background:#eff2f5"></div>
<svg width="12.6" height="9.8" viewBox="0 32 576 448" style="left:376.20px;top:770.21px"><path d="M288 32c-80.8 0-145.5 36.8-192.6 80.6C48.6 156 17.3 208 2.5 243.7c-3.3 7.9-3.3 16.7 0 24.6C17.3 304 48.6 356 95.4 399.4C142.5 443.2 207.2 480 288 480s145.5-36.8 192.6-80.6c46.8-43.5 78.1-95.4 93-131.1c3.3-7.9 3.3-16.7 0-24.6c-14.9-35.7-46.2-87.7-93-131.1C433.5 68.8 368.8 32 288 32zM144 256a144 144 0 1 1 288 0 144 144 0 1 1 -288 0zm144-64c0 35.3-28.7 64-64 64c-7.1 0-13.9-1.2-20.3-3.3c-5.5-1.8-11.9 1.6-11.7 7.4c.3 6.9 1.3 13.8 3.2 20.7c13.7 51.2 66.4 81.6 117.6 67.9s81.6-66.4 67.9-117.6c-11.1-41.5-47.8-69.4-88.6-71.1c-5.8-.2-9.2 6.1-7.4 11.7c2.1 6.4 3.3 13.2 3.3 20.3z" fill="#181c32"/></svg>
<div class="bd" style="left:730px;top:765.45px;width:70px;height:19.5px;background:#007bff"></div>
<div class="bd" style="left:1015px;top:766.37px;width:54px;height:18.85px;background:#0bb783"></div>
<div class="bd" style="left:1240px;top:766.37px;width:62.1px;height:18.85px;background:#0bb783"></div>
<div class="bd" style="left:1455px;top:766.37px;width:60px;height:18.85px;background:#ffa800"></div>
<div class="bd" style="left:305.1px;top:801.34px;width:62.70px;height:19.2px;background:#eff2f5"></div>
<div class="bd" style="left:369.00px;top:800.75px;width:25.7px;height:20px;background:#eff2f5"></div>
<svg width="12.6" height="9.8" viewBox="0 32 576 448" style="left:376.20px;top:806.10px"><path d="M288 32c-80.8 0-145.5 36.8-192.6 80.6C48.6 156 17.3 208 2.5 243.7c-3.3 7.9-3.3 16.7 0 24.6C17.3 304 48.6 356 95.4 399.4C142.5 443.2 207.2 480 288 480s145.5-36.8 192.6-80.6c46.8-43.5 78.1-95.4 93-131.1c3.3-7.9 3.3-16.7 0-24.6c-14.9-35.7-46.2-87.7-93-131.1C433.5 68.8 368.8 32 288 32zM144 256a144 144 0 1 1 288 0 144 144 0 1 1 -288 0zm144-64c0 35.3-28.7 64-64 64c-7.1 0-13.9-1.2-20.3-3.3c-5.5-1.8-11.9 1.6-11.7 7.4c.3 6.9 1.3 13.8 3.2 20.7c13.7 51.2 66.4 81.6 117.6 67.9s81.6-66.4 67.9-117.6c-11.1-41.5-47.8-69.4-88.6-71.1c-5.8-.2-9.2 6.1-7.4 11.7c2.1 6.4 3.3 13.2 3.3 20.3z" fill="#181c32"/></svg>
<div class="bd" style="left:730px;top:801.34px;width:70px;height:19.5px;background:#007bff"></div>
<div class="bd" style="left:1015px;top:802.26px;width:54px;height:18.85px;background:#0bb783"></div>
<div class="bd" style="left:1240px;top:802.26px;width:62.1px;height:18.85px;background:#0bb783"></div>
<div class="bd" style="left:1455px;top:802.26px;width:60px;height:18.85px;background:#ffa800"></div>
<div class="bd" style="left:305.1px;top:837.23px;width:62.70px;height:19.2px;background:#eff2f5"></div>
<div class="bd" style="left:369.00px;top:836.64px;width:25.7px;height:20px;background:#eff2f5"></div>
<svg width="12.6" height="9.8" viewBox="0 32 576 448" style="left:376.20px;top:841.99px"><path d="M288 32c-80.8 0-145.5 36.8-192.6 80.6C48.6 156 17.3 208 2.5 243.7c-3.3 7.9-3.3 16.7 0 24.6C17.3 304 48.6 356 95.4 399.4C142.5 443.2 207.2 480 288 480s145.5-36.8 192.6-80.6c46.8-43.5 78.1-95.4 93-131.1c3.3-7.9 3.3-16.7 0-24.6c-14.9-35.7-46.2-87.7-93-131.1C433.5 68.8 368.8 32 288 32zM144 256a144 144 0 1 1 288 0 144 144 0 1 1 -288 0zm144-64c0 35.3-28.7 64-64 64c-7.1 0-13.9-1.2-20.3-3.3c-5.5-1.8-11.9 1.6-11.7 7.4c.3 6.9 1.3 13.8 3.2 20.7c13.7 51.2 66.4 81.6 117.6 67.9s81.6-66.4 67.9-117.6c-11.1-41.5-47.8-69.4-88.6-71.1c-5.8-.2-9.2 6.1-7.4 11.7c2.1 6.4 3.3 13.2 3.3 20.3z" fill="#181c32"/></svg>
<div class="bd" style="left:730px;top:837.23px;width:70px;height:19.5px;background:#007bff"></div>
<div class="bd" style="left:1015px;top:838.15px;width:54px;height:18.85px;background:#0bb783"></div>
<div class="bd" style="left:1240px;top:838.15px;width:62.1px;height:18.85px;background:#0bb783"></div>
<div class="bd" style="left:1455px;top:838.15px;width:60px;height:18.85px;background:#ffa800"></div>
<div class="bd" style="left:305.1px;top:873.12px;width:62.70px;height:19.2px;background:#eff2f5"></div>
<div class="bd" style="left:369.00px;top:872.53px;width:25.7px;height:20px;background:#eff2f5"></div>
<svg width="12.6" height="9.8" viewBox="0 32 576 448" style="left:376.20px;top:877.88px"><path d="M288 32c-80.8 0-145.5 36.8-192.6 80.6C48.6 156 17.3 208 2.5 243.7c-3.3 7.9-3.3 16.7 0 24.6C17.3 304 48.6 356 95.4 399.4C142.5 443.2 207.2 480 288 480s145.5-36.8 192.6-80.6c46.8-43.5 78.1-95.4 93-131.1c3.3-7.9 3.3-16.7 0-24.6c-14.9-35.7-46.2-87.7-93-131.1C433.5 68.8 368.8 32 288 32zM144 256a144 144 0 1 1 288 0 144 144 0 1 1 -288 0zm144-64c0 35.3-28.7 64-64 64c-7.1 0-13.9-1.2-20.3-3.3c-5.5-1.8-11.9 1.6-11.7 7.4c.3 6.9 1.3 13.8 3.2 20.7c13.7 51.2 66.4 81.6 117.6 67.9s81.6-66.4 67.9-117.6c-11.1-41.5-47.8-69.4-88.6-71.1c-5.8-.2-9.2 6.1-7.4 11.7c2.1 6.4 3.3 13.2 3.3 20.3z" fill="#181c32"/></svg>
<div class="bd" style="left:730px;top:873.12px;width:70px;height:19.5px;background:#007bff"></div>
<div class="bd" style="left:1015px;top:874.04px;width:54px;height:18.85px;background:#0bb783"></div>
<div class="bd" style="left:1240px;top:874.04px;width:62.1px;height:18.85px;background:#0bb783"></div>
<div class="bd" style="left:1455px;top:874.04px;width:60px;height:18.85px;background:#ffa800"></div>
<div class="bd" style="left:305.1px;top:909.01px;width:62.70px;height:19.2px;background:#eff2f5"></div>
<div class="bd" style="left:369.00px;top:908.42px;width:25.7px;height:20px;background:#eff2f5"></div>
<svg width="12.6" height="9.8" viewBox="0 32 576 448" style="left:376.20px;top:913.77px"><path d="M288 32c-80.8 0-145.5 36.8-192.6 80.6C48.6 156 17.3 208 2.5 243.7c-3.3 7.9-3.3 16.7 0 24.6C17.3 304 48.6 356 95.4 399.4C142.5 443.2 207.2 480 288 480s145.5-36.8 192.6-80.6c46.8-43.5 78.1-95.4 93-131.1c3.3-7.9 3.3-16.7 0-24.6c-14.9-35.7-46.2-87.7-93-131.1C433.5 68.8 368.8 32 288 32zM144 256a144 144 0 1 1 288 0 144 144 0 1 1 -288 0zm144-64c0 35.3-28.7 64-64 64c-7.1 0-13.9-1.2-20.3-3.3c-5.5-1.8-11.9 1.6-11.7 7.4c.3 6.9 1.3 13.8 3.2 20.7c13.7 51.2 66.4 81.6 117.6 67.9s81.6-66.4 67.9-117.6c-11.1-41.5-47.8-69.4-88.6-71.1c-5.8-.2-9.2 6.1-7.4 11.7c2.1 6.4 3.3 13.2 3.3 20.3z" fill="#181c32"/></svg>
<div class="bd" style="left:730px;top:909.01px;width:70px;height:19.5px;background:#007bff"></div>
<div class="bd" style="left:1015px;top:909.93px;width:54px;height:18.85px;background:#0bb783"></div>
<div class="bd" style="left:1240px;top:909.93px;width:62.1px;height:18.85px;background:#0bb783"></div>
<div class="bd" style="left:1455px;top:909.93px;width:60px;height:18.85px;background:#ffa800"></div>
<span class="t" style="left:301.60px;top:227px;font-size:12.0px;font-weight:700;color:#a1a5b7;letter-spacing:-0.116px;">SERIAL NUMBER</span>
<span class="t" style="left:730.00px;top:227px;font-size:12.0px;font-weight:700;color:#a1a5b7;letter-spacing:-0.146px;">BLUEPRINT</span>
<span class="t" style="left:1015.25px;top:227px;font-size:12.0px;font-weight:700;color:#a1a5b7;letter-spacing:0.236px;">INVENTORY</span>
<span class="t" style="left:1240.25px;top:227px;font-size:12.0px;font-weight:700;color:#a1a5b7;letter-spacing:0.025px;">ASSEMBLY</span>
<span class="t" style="left:1454.75px;top:227px;font-size:12.0px;font-weight:700;color:#a1a5b7;letter-spacing:0.278px;">FUNCTIONAL</span>
<span class="t" style="left:1703.20px;top:227px;font-size:12.0px;font-weight:700;color:#a1a5b7;letter-spacing:-0.318px;">TAGS</span>
<span class="t" style="left:349.40px;top:170px;font-size:12.1px;color:#a1a5b7;letter-spacing:0.205px;-webkit-text-stroke:.2px #a1a5b7;">Search assets</span>
<span class="t" style="left:595.90px;top:170px;font-size:12.3px;color:#009ef7;letter-spacing:0.354px;-webkit-text-stroke:.3px #009ef7;">Filter</span>
<span class="t" style="left:1748.60px;top:170px;font-size:12.3px;color:#0bb783;letter-spacing:0.333px;-webkit-text-stroke:.35px #0bb783;">Create new asset</span>
<span class="t" style="left:311.40px;top:262px;font-size:11.05px;color:#181c32;letter-spacing:0.596px;-webkit-text-stroke:.25px #181c32;">Battery A</span>
<span class="t" style="left:736.60px;top:262px;font-size:11.05px;font-weight:700;color:#ffffff;letter-spacing:0.069px;">EV Battery</span>
<span class="t" style="left:1021.90px;top:263px;font-size:10.2px;font-weight:700;color:#ffffff;letter-spacing:0.080px;">In Stock</span>
<span class="t" style="left:1246.90px;top:263px;font-size:10.2px;font-weight:700;color:#ffffff;letter-spacing:0.240px;">Complete</span>
<span class="t" style="left:1461.50px;top:263px;font-size:9.95px;color:#181c32;letter-spacing:0.927px;-webkit-text-stroke:.4px #181c32;">Unknown</span>
<span class="t" style="left:311.40px;top:298px;font-size:11.05px;color:#181c32;letter-spacing:0.395px;-webkit-text-stroke:.25px #181c32;">Battery B</span>
<span class="t" style="left:736.60px;top:298px;font-size:11.05px;font-weight:700;color:#ffffff;letter-spacing:0.069px;">EV Battery</span>
<span class="t" style="left:1021.90px;top:299px;font-size:10.2px;font-weight:700;color:#ffffff;letter-spacing:0.080px;">In Stock</span>
<span class="t" style="left:1246.90px;top:299px;font-size:10.2px;font-weight:700;color:#ffffff;letter-spacing:0.240px;">Complete</span>
<span class="t" style="left:1461.50px;top:299px;font-size:9.95px;color:#181c32;letter-spacing:0.927px;-webkit-text-stroke:.4px #181c32;">Unknown</span>
<span class="t" style="left:311.40px;top:334px;font-size:11.05px;color:#181c32;letter-spacing:-0.087px;-webkit-text-stroke:.25px #181c32;">Battery_1</span>
<span class="t" style="left:736.60px;top:334px;font-size:11.05px;font-weight:700;color:#ffffff;letter-spacing:0.069px;">EV Battery</span>
<span class="t" style="left:1021.90px;top:335px;font-size:10.2px;font-weight:700;color:#ffffff;letter-spacing:0.080px;">In Stock</span>
<span class="t" style="left:1246.90px;top:335px;font-size:10.2px;font-weight:700;color:#ffffff;letter-spacing:0.240px;">Complete</span>
<span class="t" style="left:1461.50px;top:335px;font-size:9.95px;color:#181c32;letter-spacing:0.927px;-webkit-text-stroke:.4px #181c32;">Unknown</span>
<span class="t" style="left:311.40px;top:369px;font-size:11.05px;color:#181c32;letter-spacing:0.129px;-webkit-text-stroke:.25px #181c32;">Battery_10</span>
<span class="t" style="left:736.60px;top:370px;font-size:11.05px;font-weight:700;color:#ffffff;letter-spacing:0.069px;">EV Battery</span>
<span class="t" style="left:1021.90px;top:371px;font-size:10.2px;font-weight:700;color:#ffffff;letter-spacing:0.080px;">In Stock</span>
<span class="t" style="left:1246.90px;top:371px;font-size:10.2px;font-weight:700;color:#ffffff;letter-spacing:0.240px;">Complete</span>
<span class="t" style="left:1461.50px;top:371px;font-size:9.95px;color:#181c32;letter-spacing:0.927px;-webkit-text-stroke:.4px #181c32;">Unknown</span>
<span class="t" style="left:311.40px;top:405px;font-size:11.05px;color:#181c32;-webkit-text-stroke:.25px #181c32;">Battery_11</span>
<span class="t" style="left:736.60px;top:406px;font-size:11.05px;font-weight:700;color:#ffffff;letter-spacing:0.069px;">EV Battery</span>
<span class="t" style="left:1021.90px;top:407px;font-size:10.2px;font-weight:700;color:#ffffff;letter-spacing:0.080px;">In Stock</span>
<span class="t" style="left:1246.90px;top:407px;font-size:10.2px;font-weight:700;color:#ffffff;letter-spacing:0.240px;">Complete</span>
<span class="t" style="left:1461.50px;top:407px;font-size:9.95px;color:#181c32;letter-spacing:0.927px;-webkit-text-stroke:.4px #181c32;">Unknown</span>
<span class="t" style="left:311.40px;top:441px;font-size:11.05px;color:#181c32;letter-spacing:0.018px;-webkit-text-stroke:.25px #181c32;">Battery_12</span>
<span class="t" style="left:736.60px;top:442px;font-size:11.05px;font-weight:700;color:#ffffff;letter-spacing:0.069px;">EV Battery</span>
<span class="t" style="left:1021.90px;top:443px;font-size:10.2px;font-weight:700;color:#ffffff;letter-spacing:0.080px;">In Stock</span>
<span class="t" style="left:1246.90px;top:443px;font-size:10.2px;font-weight:700;color:#ffffff;letter-spacing:0.240px;">Complete</span>
<span class="t" style="left:1461.50px;top:443px;font-size:9.95px;color:#181c32;letter-spacing:0.927px;-webkit-text-stroke:.4px #181c32;">Unknown</span>
<span class="t" style="left:311.40px;top:477px;font-size:11.05px;color:#181c32;letter-spacing:0.129px;-webkit-text-stroke:.25px #181c32;">Battery_13</span>
<span class="t" style="left:736.60px;top:478px;font-size:11.05px;font-weight:700;color:#ffffff;letter-spacing:0.069px;">EV Battery</span>
<span class="t" style="left:1021.90px;top:479px;font-size:10.2px;font-weight:700;color:#ffffff;letter-spacing:0.080px;">In Stock</span>
<span class="t" style="left:1246.90px;top:479px;font-size:10.2px;font-weight:700;color:#ffffff;letter-spacing:0.240px;">Complete</span>
<span class="t" style="left:1461.50px;top:479px;font-size:9.95px;color:#181c32;letter-spacing:0.927px;-webkit-text-stroke:.4px #181c32;">Unknown</span>
<span class="t" style="left:311.40px;top:513px;font-size:11.05px;color:#181c32;letter-spacing:0.129px;-webkit-text-stroke:.25px #181c32;">Battery_14</span>
<span class="t" style="left:736.60px;top:514px;font-size:11.05px;font-weight:700;color:#ffffff;letter-spacing:0.069px;">EV Battery</span>
<span class="t" style="left:1021.90px;top:514px;font-size:10.2px;font-weight:700;color:#ffffff;letter-spacing:0.080px;">In Stock</span>
<span class="t" style="left:1246.90px;top:514px;font-size:10.2px;font-weight:700;color:#ffffff;letter-spacing:0.240px;">Complete</span>
<span class="t" style="left:1461.50px;top:514px;font-size:9.95px;color:#181c32;letter-spacing:0.927px;-webkit-text-stroke:.4px #181c32;">Unknown</span>
<span class="t" style="left:311.40px;top:549px;font-size:11.05px;color:#181c32;letter-spacing:0.018px;-webkit-text-stroke:.25px #181c32;">Battery_15</span>
<span class="t" style="left:736.60px;top:549px;font-size:11.05px;font-weight:700;color:#ffffff;letter-spacing:0.069px;">EV Battery</span>
<span class="t" style="left:1021.90px;top:550px;font-size:10.2px;font-weight:700;color:#ffffff;letter-spacing:0.080px;">In Stock</span>
<span class="t" style="left:1246.90px;top:550px;font-size:10.2px;font-weight:700;color:#ffffff;letter-spacing:0.240px;">Complete</span>
<span class="t" style="left:1461.50px;top:550px;font-size:9.95px;color:#181c32;letter-spacing:0.927px;-webkit-text-stroke:.4px #181c32;">Unknown</span>
<span class="t" style="left:311.40px;top:585px;font-size:11.05px;color:#181c32;letter-spacing:0.129px;-webkit-text-stroke:.25px #181c32;">Battery_16</span>
<span class="t" style="left:736.60px;top:585px;font-size:11.05px;font-weight:700;color:#ffffff;letter-spacing:0.069px;">EV Battery</span>
<span class="t" style="left:1021.90px;top:586px;font-size:10.2px;font-weight:700;color:#ffffff;letter-spacing:0.080px;">In Stock</span>
<span class="t" style="left:1246.90px;top:586px;font-size:10.2px;font-weight:700;color:#ffffff;letter-spacing:0.240px;">Complete</span>
<span class="t" style="left:1461.50px;top:586px;font-size:9.95px;color:#181c32;letter-spacing:0.927px;-webkit-text-stroke:.4px #181c32;">Unknown</span>
<span class="t" style="left:311.40px;top:621px;font-size:11.05px;color:#181c32;letter-spacing:0.018px;-webkit-text-stroke:.25px #181c32;">Battery_17</span>
<span class="t" style="left:736.60px;top:621px;font-size:11.05px;font-weight:700;color:#ffffff;letter-spacing:0.069px;">EV Battery</span>
<span class="t" style="left:1021.90px;top:622px;font-size:10.2px;font-weight:700;color:#ffffff;letter-spacing:0.080px;">In Stock</span>
<span class="t" style="left:1246.90px;top:622px;font-size:10.2px;font-weight:700;color:#ffffff;letter-spacing:0.240px;">Complete</span>
<span class="t" style="left:1461.50px;top:622px;font-size:9.95px;color:#181c32;letter-spacing:0.927px;-webkit-text-stroke:.4px #181c32;">Unknown</span>
<span class="t" style="left:311.40px;top:657px;font-size:11.05px;color:#181c32;letter-spacing:0.040px;-webkit-text-stroke:.25px #181c32;">Battery_18</span>
<span class="t" style="left:736.60px;top:657px;font-size:11.05px;font-weight:700;color:#ffffff;letter-spacing:0.069px;">EV Battery</span>
<span class="t" style="left:1021.90px;top:658px;font-size:10.2px;font-weight:700;color:#ffffff;letter-spacing:0.080px;">In Stock</span>
<span class="t" style="left:1246.90px;top:658px;font-size:10.2px;font-weight:700;color:#ffffff;letter-spacing:0.240px;">Complete</span>
<span class="t" style="left:1461.50px;top:658px;font-size:9.95px;color:#181c32;letter-spacing:0.927px;-webkit-text-stroke:.4px #181c32;">Unknown</span>
<span class="t" style="left:311.40px;top:692px;font-size:11.05px;color:#181c32;letter-spacing:0.300px;-webkit-text-stroke:.25px #181c32;">Battery_2</span>
<span class="t" style="left:736.60px;top:693px;font-size:11.05px;font-weight:700;color:#ffffff;letter-spacing:0.069px;">EV Battery</span>
<span class="t" style="left:1021.90px;top:694px;font-size:10.2px;font-weight:700;color:#ffffff;letter-spacing:0.080px;">In Stock</span>
<span class="t" style="left:1246.90px;top:694px;font-size:10.2px;font-weight:700;color:#ffffff;letter-spacing:0.240px;">Complete</span>
<span class="t" style="left:1461.50px;top:694px;font-size:9.95px;color:#181c32;letter-spacing:0.927px;-webkit-text-stroke:.4px #181c32;">Unknown</span>
<span class="t" style="left:311.40px;top:728px;font-size:11.05px;color:#181c32;letter-spacing:0.300px;-webkit-text-stroke:.25px #181c32;">Battery_3</span>
<span class="t" style="left:736.60px;top:729px;font-size:11.05px;font-weight:700;color:#ffffff;letter-spacing:0.069px;">EV Battery</span>
<span class="t" style="left:1021.90px;top:730px;font-size:10.2px;font-weight:700;color:#ffffff;letter-spacing:0.080px;">In Stock</span>
<span class="t" style="left:1246.90px;top:730px;font-size:10.2px;font-weight:700;color:#ffffff;letter-spacing:0.240px;">Complete</span>
<span class="t" style="left:1461.50px;top:730px;font-size:9.95px;color:#181c32;letter-spacing:0.927px;-webkit-text-stroke:.4px #181c32;">Unknown</span>
<span class="t" style="left:311.40px;top:764px;font-size:11.05px;color:#181c32;letter-spacing:0.300px;-webkit-text-stroke:.25px #181c32;">Battery_4</span>
<span class="t" style="left:736.60px;top:765px;font-size:11.05px;font-weight:700;color:#ffffff;letter-spacing:0.069px;">EV Battery</span>
<span class="t" style="left:1021.90px;top:766px;font-size:10.2px;font-weight:700;color:#ffffff;letter-spacing:0.080px;">In Stock</span>
<span class="t" style="left:1246.90px;top:766px;font-size:10.2px;font-weight:700;color:#ffffff;letter-spacing:0.240px;">Complete</span>
<span class="t" style="left:1461.50px;top:766px;font-size:9.95px;color:#181c32;letter-spacing:0.927px;-webkit-text-stroke:.4px #181c32;">Unknown</span>
<span class="t" style="left:311.40px;top:800px;font-size:11.05px;color:#181c32;letter-spacing:0.300px;-webkit-text-stroke:.25px #181c32;">Battery_5</span>
<span class="t" style="left:736.60px;top:801px;font-size:11.05px;font-weight:700;color:#ffffff;letter-spacing:0.069px;">EV Battery</span>
<span class="t" style="left:1021.90px;top:802px;font-size:10.2px;font-weight:700;color:#ffffff;letter-spacing:0.080px;">In Stock</span>
<span class="t" style="left:1246.90px;top:802px;font-size:10.2px;font-weight:700;color:#ffffff;letter-spacing:0.240px;">Complete</span>
<span class="t" style="left:1461.50px;top:802px;font-size:9.95px;color:#181c32;letter-spacing:0.927px;-webkit-text-stroke:.4px #181c32;">Unknown</span>
<span class="t" style="left:311.40px;top:836px;font-size:11.05px;color:#181c32;letter-spacing:0.300px;-webkit-text-stroke:.25px #181c32;">Battery_6</span>
<span class="t" style="left:736.60px;top:837px;font-size:11.05px;font-weight:700;color:#ffffff;letter-spacing:0.069px;">EV Battery</span>
<span class="t" style="left:1021.90px;top:837px;font-size:10.2px;font-weight:700;color:#ffffff;letter-spacing:0.080px;">In Stock</span>
<span class="t" style="left:1246.90px;top:837px;font-size:10.2px;font-weight:700;color:#ffffff;letter-spacing:0.240px;">Complete</span>
<span class="t" style="left:1461.50px;top:837px;font-size:9.95px;color:#181c32;letter-spacing:0.927px;-webkit-text-stroke:.4px #181c32;">Unknown</span>
<span class="t" style="left:311.40px;top:872px;font-size:11.05px;color:#181c32;letter-spacing:0.300px;-webkit-text-stroke:.25px #181c32;">Battery_7</span>
<span class="t" style="left:736.60px;top:873px;font-size:11.05px;font-weight:700;color:#ffffff;letter-spacing:0.069px;">EV Battery</span>
<span class="t" style="left:1021.90px;top:873px;font-size:10.2px;font-weight:700;color:#ffffff;letter-spacing:0.080px;">In Stock</span>
<span class="t" style="left:1246.90px;top:873px;font-size:10.2px;font-weight:700;color:#ffffff;letter-spacing:0.240px;">Complete</span>
<span class="t" style="left:1461.50px;top:873px;font-size:9.95px;color:#181c32;letter-spacing:0.927px;-webkit-text-stroke:.4px #181c32;">Unknown</span>
<span class="t" style="left:311.40px;top:908px;font-size:11.05px;color:#181c32;letter-spacing:0.300px;-webkit-text-stroke:.25px #181c32;">Battery_8</span>
<span class="t" style="left:736.60px;top:908px;font-size:11.05px;font-weight:700;color:#ffffff;letter-spacing:0.069px;">EV Battery</span>
<span class="t" style="left:1021.90px;top:909px;font-size:10.2px;font-weight:700;color:#ffffff;letter-spacing:0.080px;">In Stock</span>
<span class="t" style="left:1246.90px;top:909px;font-size:10.2px;font-weight:700;color:#ffffff;letter-spacing:0.240px;">Complete</span>
<span class="t" style="left:1461.50px;top:909px;font-size:9.95px;color:#181c32;letter-spacing:0.927px;-webkit-text-stroke:.4px #181c32;">Unknown</span>
</main>
<div id="sb"><i class="up"></i><div class="thumb"></div><i class="dn"></i></div>
<svg width="1920" height="929" viewBox="0 0 1920 929" style="left:0;top:0;z-index:9;pointer-events:none"><path d="M1700.5 452.4 L1700.5 468.4 L1704.5 465.2 L1707 470.3 Q1708.2 471 1709.3 470.2 Q1709.9 469.5 1709.5 468.6 L1707.3 464.7 L1711.5 464.7 L1711.7 463.5 Z" fill="#fff" stroke="#fff" stroke-width="2.8" stroke-linejoin="round" stroke-opacity=".9"/><path d="M1700.5 452.4 L1700.5 468.4 L1704.5 465.2 L1707 470.3 Q1708.2 471 1709.3 470.2 Q1709.9 469.5 1709.5 468.6 L1707.3 464.7 L1711.5 464.7 L1711.7 463.5 Z" fill="#fff" stroke="#16161f" stroke-width="1.05" stroke-linejoin="round"/></svg>
</body>
</html>
